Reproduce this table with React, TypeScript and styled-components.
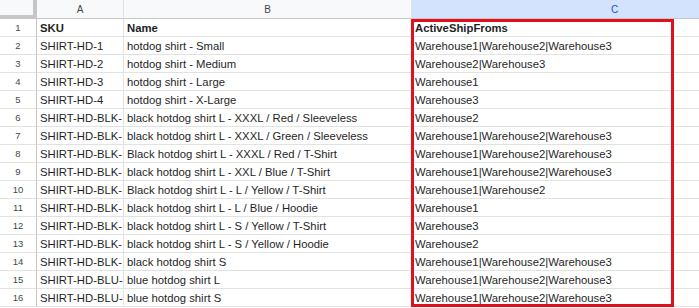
import React from "react";
import styled, { createGlobalStyle } from "styled-components";

const GlobalStyle = createGlobalStyle`
  body {
    margin: 0;
    background: #ffffff;
    font-family: "Liberation Sans", Arial, sans-serif;
  }
`;

const Sheet = styled.div`
  position: relative;
  width: 699px;
  height: 308px;
  overflow: hidden;
  background: #ffffff;
`;

const Grid = styled.div`
  display: grid;
  grid-template-columns: 37px 87px 288px 406px;
  grid-template-rows: 19px;
  grid-auto-rows: 18px;
`;

const Corner = styled.div`
  box-sizing: border-box;
  background: #f8f9fa;
  border-right: 4px solid #c4c7c5;
  border-bottom: 4px solid #c4c7c5;
`;

const ColHeader = styled.div<{ $active?: boolean }>`
  box-sizing: border-box;
  display: flex;
  align-items: center;
  justify-content: center;
  background: ${(p) => (p.$active ? "#d3e3fd" : "#f8f9fa")};
  border-right: 1px solid ${(p) => (p.$active ? "#d3e3fd" : "#e1e3e1")};
  border-bottom: 1px solid #c4c7c5;
  color: ${(p) => (p.$active ? "#0b57d0" : "#444746")};
  font-size: 10px;
`;

const RowHeader = styled.div`
  box-sizing: border-box;
  display: flex;
  align-items: center;
  justify-content: center;
  background: #ffffff;
  border-right: 1px solid #c4c7c5;
  border-bottom: 1px solid #e1e3e1;
  color: #444746;
  font-size: 9.5px;
`;

const Cell = styled.div<{ $bold?: boolean }>`
  box-sizing: border-box;
  display: flex;
  align-items: center;
  padding: 0 3px;
  border-right: 1px solid #e1e3e1;
  border-bottom: 1px solid #e1e3e1;
  color: #1f1f1f;
  font-size: 11.3px;
  font-weight: ${(p) => (p.$bold ? 700 : 400)};
  white-space: nowrap;
  overflow: hidden;
`;

const Highlight = styled.div`
  position: absolute;
  left: 411px;
  top: 19px;
  width: 263px;
  height: 288px;
  box-sizing: border-box;
  border: 3px solid #e0101f;
  pointer-events: none;
`;

const rows: [string, string, string][] = [
  ["SKU", "Name", "ActiveShipFroms"],
  ["SHIRT-HD-1", "hotdog shirt - Small", "Warehouse1|Warehouse2|Warehouse3"],
  ["SHIRT-HD-2", "hotdog shirt - Medium", "Warehouse2|Warehouse3"],
  ["SHIRT-HD-3", "hotdog shirt - Large", "Warehouse1"],
  ["SHIRT-HD-4", "hotdog shirt - X-Large", "Warehouse3"],
  ["SHIRT-HD-BLK-", "black hotdog shirt L - XXXL / Red / Sleeveless", "Warehouse2"],
  ["SHIRT-HD-BLK-", "black hotdog shirt L - XXXL / Green / Sleeveless", "Warehouse1|Warehouse2|Warehouse3"],
  ["SHIRT-HD-BLK-", "Black hotdog shirt L - XXXL / Red / T-Shirt", "Warehouse1|Warehouse2|Warehouse3"],
  ["SHIRT-HD-BLK-", "black hotdog shirt L - XXL / Blue / T-Shirt", "Warehouse1|Warehouse2|Warehouse3"],
  ["SHIRT-HD-BLK-", "Black hotdog shirt L - L / Yellow / T-Shirt", "Warehouse1|Warehouse2"],
  ["SHIRT-HD-BLK-", "black hotdog shirt L - L / Blue / Hoodie", "Warehouse1"],
  ["SHIRT-HD-BLK-", "black hotdog shirt L - S / Yellow / T-Shirt", "Warehouse3"],
  ["SHIRT-HD-BLK-", "black hotdog shirt L - S / Yellow / Hoodie", "Warehouse2"],
  ["SHIRT-HD-BLK-", "black hotdog shirt S", "Warehouse1|Warehouse2|Warehouse3"],
  ["SHIRT-HD-BLU-", "blue hotdog shirt L", "Warehouse1|Warehouse2|Warehouse3"],
  ["SHIRT-HD-BLU-", "blue hotdog shirt S", "Warehouse1|Warehouse2|Warehouse3"],
];

const App = () => {
  return (
    <Sheet>
      <GlobalStyle />
      <Grid>
        <Corner />
        <ColHeader>A</ColHeader>
        <ColHeader>B</ColHeader>
        <ColHeader $active>C</ColHeader>
        {rows.map((r, i) => (
          <React.Fragment key={i}>
            <RowHeader>{i + 1}</RowHeader>
            <Cell $bold={i === 0}>{r[0]}</Cell>
            <Cell $bold={i === 0}>{r[1]}</Cell>
            <Cell $bold={i === 0}>{r[2]}</Cell>
          </React.Fragment>
        ))}
      </Grid>
      <Highlight />
    </Sheet>
  );
};

export default App;
